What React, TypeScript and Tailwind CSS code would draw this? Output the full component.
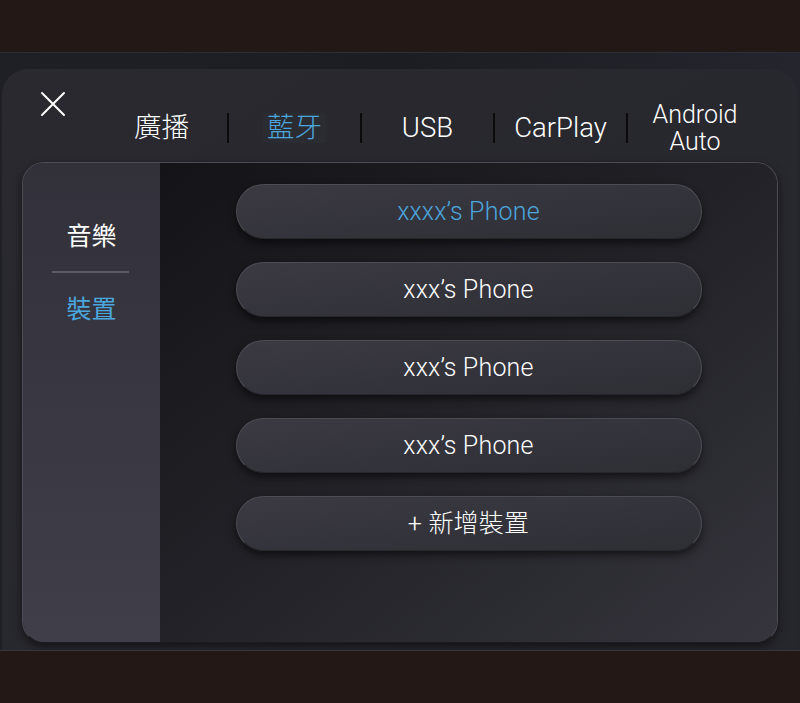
import React from "react";

const latin = { fontFamily: "Roboto, 'Noto Sans CJK TC', sans-serif" };

function Tab({ label, active }: { label: React.ReactNode; active?: boolean }) {
  return (
    <div className="w-[131px] flex items-center justify-center">
      <div
        className={
          "px-[4px] leading-[30px] text-[27.5px] font-light " +
          (active ? "text-[#4ba6de] bg-[#2b2b32]" : "text-white")
        }
      >
        {label}
      </div>
    </div>
  );
}

function Divider() {
  return <div className="w-[2px] h-[30px] bg-[#0b0b0d]" />;
}

function DeviceButton({ label, active }: { label: string; active?: boolean }) {
  return (
    <div className="w-[466px] h-[55px] rounded-full border border-[#4c4c55] border-b-[#26262c] bg-gradient-to-br from-[#3b3a43] to-[#2e2e35] shadow-[0_4px_8px_rgba(0,0,0,0.55)] flex items-center justify-center">
      <span
        className={"text-[25px] font-light tracking-[0.2px] " + (active ? "text-[#4ba6de]" : "text-white")}
        style={latin}
      >
        {label}
      </span>
    </div>
  );
}

export default function App() {
  return (
    <div
      className="w-[800px] h-[703px] flex flex-col bg-[#231816] overflow-hidden"
      style={{ fontFamily: "Roboto, 'Noto Sans CJK TC', sans-serif" }}
    >
      <div className="h-[52px] shrink-0 bg-[#231816]" />
      <div className="h-[598px] shrink-0 flex flex-col pt-[16px] bg-gradient-to-r from-[#1f1f26] via-[#1c1c23] to-[#25252d] border-t border-[#2e2e36]">
        <div className="flex-1 ml-[2px] mr-[3px] rounded-t-[26px] bg-gradient-to-br from-[#29292f] to-[#26262d] flex flex-col">
          <div className="h-[93px] shrink-0 flex items-start">
            <div className="w-[94px] pl-[38px] pt-[22px]">
              <svg width="26" height="26" viewBox="0 0 26 26">
                <path d="M2 2 L24 24 M24 2 L2 24" stroke="#ffffff" strokeWidth="2" strokeLinecap="round" />
              </svg>
            </div>
            <div className="mt-[44px] h-[30px] flex items-center">
              <Tab label="廣播" />
              <Divider />
              <Tab label="藍牙" active />
              <Divider />
              <Tab label="USB" />
              <Divider />
              <Tab label="CarPlay" />
              <Divider />
              <div className="w-[134px] flex flex-col items-center text-white text-[25px] font-light leading-[27px] text-center">
                <span>Android</span>
                <span>Auto</span>
              </div>
            </div>
          </div>
          <div className="h-[481px] shrink-0 ml-[20px] mr-[19px] rounded-[22px] border border-[#4c4c55] border-b-[#1b1b20] overflow-hidden flex shadow-[0_4px_10px_rgba(0,0,0,0.5)]">
            <div className="w-[137px] shrink-0 bg-gradient-to-b from-[#32313a] to-[#403e49] flex flex-col items-center">
              <div className="mt-[56px] text-[25px] text-white leading-[36px]">音樂</div>
              <div className="mt-[16px] mr-[2px] w-[77px] h-[2px] bg-[#5d5c66]" />
              <div className="mt-[19px] text-[25px] text-[#4ba6de] leading-[36px]">裝置</div>
            </div>
            <div className="flex-1 bg-gradient-to-br from-[#141418] via-[#222228] to-[#36353d] flex flex-col items-center pt-[21px] gap-[23px]">
              <DeviceButton label="xxxx’s Phone" active />
              <DeviceButton label="xxx’s Phone" />
              <DeviceButton label="xxx’s Phone" />
              <DeviceButton label="xxx’s Phone" />
              <DeviceButton label="+ 新增裝置" />
            </div>
          </div>
        </div>
      </div>
      <div className="flex-1 bg-[#231816] border-t border-[#3a3440]" />
    </div>
  );
}
